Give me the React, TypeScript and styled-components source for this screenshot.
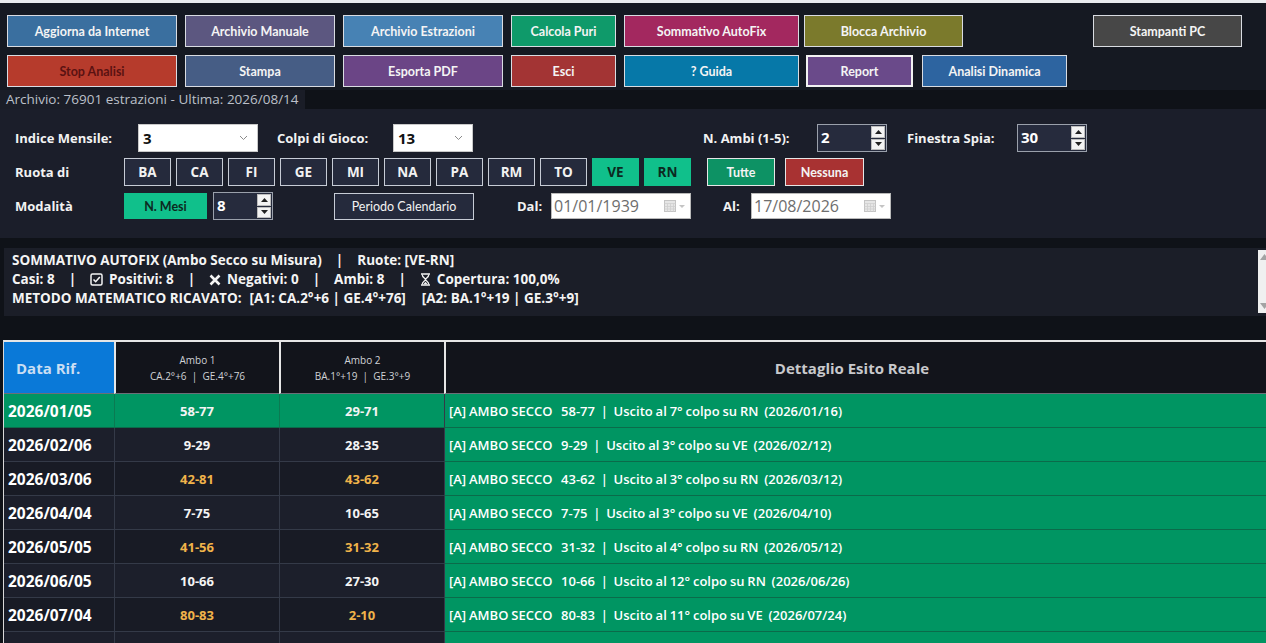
import React from "react";
import styled, { createGlobalStyle } from "styled-components";

const GlobalStyle = createGlobalStyle`
  html, body {
    margin: 0;
    padding: 0;
    background: #0f1218;
    overflow: hidden;
  }
  * {
    box-sizing: border-box;
  }
`;

const Page = styled.div`
  width: 1266px;
  height: 643px;
  overflow: hidden;
  background: #0f1218;
  font-family: "Open Sans", "Noto Sans", sans-serif;
  color: #fff;
`;

const TopStrip = styled.div`
  height: 3px;
  background: #e9ecef;
`;

const Toolbar = styled.div`
  background: #151922;
  padding: 12px 7px 3px;
  display: flex;
  flex-direction: column;
  gap: 8px;
`;

const ToolRow = styled.div`
  display: flex;
  gap: 8px;
`;

const ToolButton = styled.button<{ $w: number; $bg: string; $fg?: string; $thick?: boolean; $ml?: number }>`
  width: ${(p) => p.$w}px;
  height: 32px;
  margin-left: ${(p) => p.$ml ?? 0}px;
  background: ${(p) => p.$bg};
  color: ${(p) => p.$fg ?? "#f4f4f4"};
  border: ${(p) => (p.$thick ? "2px solid #f2f2f2" : "1px solid #d9dce2")};
  font-family: "Lato", "Open Sans", sans-serif;
  font-weight: 700;
  font-size: 12.5px;
  padding: 0;
  cursor: pointer;
`;

const StatusBar = styled.div`
  height: 19px;
  display: flex;
`;

const StatusText = styled.div`
  width: 305px;
  background: #1a1d27;
  color: #bcc0c9;
  font-size: 13.5px;
  line-height: 19px;
  padding-left: 6px;
  white-space: nowrap;
`;

const Panel = styled.div`
  background: #1b1e2a;
  padding: 15px 0 18px 15px;
  display: flex;
  flex-direction: column;
  gap: 6px;
`;

const FormRow = styled.div`
  display: flex;
  align-items: center;
  height: 28px;
`;

const FieldLabel = styled.span<{ $w: number; $ml?: number }>`
  width: ${(p) => p.$w}px;
  margin-left: ${(p) => p.$ml ?? 0}px;
  flex: none;
  font-size: 13px;
  font-weight: 700;
  color: #f2f2f2;
`;

const SelectBox = styled.div<{ $w: number }>`
  width: ${(p) => p.$w}px;
  height: 28px;
  background: #fff;
  border: 1px solid #c9c9c9;
  display: flex;
  align-items: center;
  justify-content: space-between;
  padding: 0 9px 0 4px;
  color: #111;
  font-size: 15px;
  font-weight: 700;
`;

const Spinner = styled.div<{ $w: number; $ml?: number }>`
  width: ${(p) => p.$w}px;
  height: 28px;
  margin-left: ${(p) => p.$ml ?? 0}px;
  background: #262b3d;
  border: 1px solid #9aa0ab;
  display: flex;
  align-items: stretch;
`;

const SpinValue = styled.span`
  flex: 1;
  padding-left: 3px;
  font-size: 15px;
  font-weight: 700;
  color: #fff;
  line-height: 25px;
`;

const SpinArrows = styled.div`
  width: 16px;
  display: flex;
  flex-direction: column;
  gap: 1px;
  padding: 1px;
`;

const SpinBtn = styled.div`
  flex: 1;
  background: #f3f3f3;
  border: 1px solid #bdbdbd;
  display: flex;
  align-items: center;
  justify-content: center;
`;

const RuotaGroup = styled.div`
  display: flex;
  gap: 5px;
`;

const RuotaButton = styled.button<{ $active?: boolean }>`
  width: 47px;
  height: 28px;
  padding: 0;
  background: ${(p) => (p.$active ? "#10c08b" : "#252a3c")};
  color: ${(p) => (p.$active ? "#0c2a1f" : "#f2f2f2")};
  border: 1px solid ${(p) => (p.$active ? "#10c08b" : "#c7ccd6")};
  font-family: "Open Sans", sans-serif;
  font-size: 13.5px;
  font-weight: 700;
`;

const ActionButton = styled.button<{ $w: number; $bg: string; $ml: number }>`
  width: ${(p) => p.$w}px;
  height: 28px;
  margin-left: ${(p) => p.$ml}px;
  padding: 0;
  background: ${(p) => p.$bg};
  color: #f4f4f4;
  border: 1px solid #e6e6e6;
  font-family: "Lato", sans-serif;
  font-size: 12.5px;
  font-weight: 700;
`;

const ModeButton = styled.button`
  width: 83px;
  height: 26px;
  padding: 0;
  background: #10c08b;
  color: #0c2a1f;
  border: none;
  font-family: "Lato", sans-serif;
  font-size: 12.5px;
  font-weight: 700;
`;

const PlainButton = styled.button`
  width: 140px;
  height: 27px;
  margin-left: 61px;
  padding: 0;
  background: #252a3c;
  color: #f2f2f2;
  border: 1px solid #c7ccd6;
  font-family: "Lato", sans-serif;
  font-size: 12.5px;
  font-weight: 400;
`;

const DateBox = styled.div`
  width: 140px;
  height: 26px;
  background: #fff;
  border: 1px solid #b9b9b9;
  display: flex;
  align-items: center;
  justify-content: space-between;
  padding: 0 4px 0 2px;
  color: #6e6e6e;
  font-size: 16px;
`;

const Summary = styled.div`
  margin: 10px -9px 0 4px;
  height: 68px;
  background: #1b1e28;
  display: flex;
  justify-content: space-between;
`;

const SummaryText = styled.div`
  padding: 3px 8px;
  font-size: 13.5px;
  font-weight: 700;
  color: #f4f4f4;
`;

const SummaryLine = styled.div`
  height: 19px;
  line-height: 19px;
  white-space: pre;
  display: flex;
  align-items: center;
`;

const Sep = styled.span`
  margin: 0 14px;
`;

const Gap = styled.span<{ $w: number }>`
  display: inline-block;
  width: ${(p) => p.$w}px;
`;

const IconSlot = styled.span`
  display: inline-flex;
  margin-right: 6px;
`;

const Scrollbar = styled.div`
  width: 17px;
  margin: 2px 0 3px;
  background: #f0f0f0;
  display: flex;
  flex-direction: column;
  justify-content: space-between;
  padding: 4px 0 4px 2px;
`;

const Table = styled.div`
  margin: 24px 0 0 3px;
  border-top: 2px solid #e6e6e6;
  border-left: 1px solid #d8d8d8;
`;

const GridRow = styled.div<{ $h: number }>`
  display: grid;
  grid-template-columns: 110px 165px 165px 1fr;
  height: ${(p) => p.$h}px;
`;

const HeadCell = styled.div<{ $blue?: boolean; $first?: boolean }>`
  background: ${(p) => (p.$blue ? "#0a79d8" : "#12141b")};
  border-left: ${(p) => (p.$first ? "none" : "2px solid #e6e6e6")};
  border-bottom: 1px solid #6b6f78;
  display: flex;
  flex-direction: column;
  justify-content: center;
  align-items: center;
  color: #d0d2d6;
`;

const DateHead = styled(HeadCell)`
  align-items: flex-start;
  padding-left: 12px;
  font-size: 15px;
  font-weight: 700;
  color: #c9def3;
`;

const AmboHead = styled(HeadCell)`
  font-size: 10px;
  line-height: 16px;
  white-space: pre;
`;

const DetailHead = styled(HeadCell)`
  font-size: 15px;
  font-weight: 700;
  color: #c8c9cc;
  padding-right: 8px;
`;

const Cell = styled.div<{ $green?: boolean; $alt?: boolean }>`
  background: ${(p) => (p.$green ? "#009562" : p.$alt ? "#181b25" : "#1c1f2b")};
  border-bottom: 1px solid ${(p) => (p.$green ? "#0b6b4a" : "#343a48")};
  border-left: 1px solid ${(p) => (p.$green ? "#0b7a52" : "#343a48")};
  display: flex;
  align-items: center;
`;

const DateCell = styled(Cell)`
  border-left: none;
  padding-left: 4px;
  font-size: 15.5px;
  font-weight: 700;
  color: #fff;
`;

const NumCell = styled(Cell)<{ $hot?: boolean }>`
  justify-content: center;
  font-size: 13px;
  font-weight: 700;
  color: ${(p) => (p.$hot ? "#f0b34a" : "#f4f4f4")};
`;

const DetailCell = styled(Cell)`
  background: #009562;
  border-bottom-color: #0b6b4a;
  border-left-color: #343a48;
  padding-left: 4px;
  font-size: 13px;
  font-weight: 600;
  color: #fff;
  white-space: pre;
  word-spacing: -0.5px;
`;

const Chevron = () => (
  <svg width="9" height="6" viewBox="0 0 9 6">
    <path d="M1 1l3.5 3.5L8 1" fill="none" stroke="#8a8a8a" strokeWidth="1" />
  </svg>
);

const Tri = ({ down }: { down?: boolean }) => (
  <svg width="7" height="4" viewBox="0 0 7 4">
    <path d={down ? "M0 0h7L3.5 4z" : "M0 4h7L3.5 0z"} fill="#222" />
  </svg>
);

const Spin = ({ value, w, ml }: { value: string; w: number; ml?: number }) => (
  <Spinner $w={w} $ml={ml}>
    <SpinValue>{value}</SpinValue>
    <SpinArrows>
      <SpinBtn>
        <Tri />
      </SpinBtn>
      <SpinBtn>
        <Tri down />
      </SpinBtn>
    </SpinArrows>
  </Spinner>
);

const CalIcon = () => (
  <svg width="22" height="14" viewBox="0 0 22 14">
    <rect x="0.5" y="1.5" width="11" height="11" fill="#e6e6e6" stroke="#c4c4c4" />
    <path d="M0.5 4.5h11M3.5 4.5v8M6.5 4.5v8M9.5 4.5v8M0.5 7.5h11M0.5 10h11" stroke="#cfcfcf" strokeWidth="0.8" />
    <path d="M15 6h6l-3 3z" fill="#c4c4c4" />
  </svg>
);

const CheckIcon = () => (
  <svg width="13" height="13" viewBox="0 0 13 13">
    <rect x="1" y="1" width="11" height="11" rx="1.5" fill="none" stroke="#f4f4f4" strokeWidth="1.5" />
    <path d="M3.5 6.5l2.2 2.2L9.8 4" fill="none" stroke="#f4f4f4" strokeWidth="1.6" />
  </svg>
);

const CrossIcon = () => (
  <svg width="12" height="12" viewBox="0 0 12 12">
    <path d="M1.5 1.5l9 9M10.5 1.5l-9 9" stroke="#f4f4f4" strokeWidth="2.6" />
  </svg>
);

const HourIcon = () => (
  <svg width="11" height="13" viewBox="0 0 11 13">
    <path d="M1 1h9M1 12h9" stroke="#f4f4f4" strokeWidth="1.6" />
    <path d="M2.2 1.5c0 3 3.3 3.6 3.3 5S2.2 8.5 2.2 11.5M8.8 1.5c0 3-3.3 3.6-3.3 5s3.3 2 3.3 5" fill="none" stroke="#f4f4f4" strokeWidth="1.3" />
    <path d="M3.4 11.2L5.5 8.8l2.1 2.4z" fill="#f4f4f4" />
  </svg>
);

const ScrollArrow = ({ down }: { down?: boolean }) => (
  <svg width="9" height="6" viewBox="0 0 9 6">
    <path d={down ? "M0 0h9L4.5 6z" : "M0 6h9L4.5 0z"} fill="#a3a3a3" />
  </svg>
);

const topRow = [
  { label: "Aggiorna da Internet", w: 170, bg: "#3a6f9f" },
  { label: "Archivio Manuale", w: 150, bg: "#5c5780" },
  { label: "Archivio Estrazioni", w: 160, bg: "#4782b4" },
  { label: "Calcola Puri", w: 105, bg: "#0f9a6a" },
  { label: "Sommativo AutoFix", w: 175, bg: "#a3285f" },
  { label: "Blocca Archivio", w: 159, bg: "#7b7a2c", ml: -3 },
  { label: "Stampanti PC", w: 149, bg: "#474747", ml: 122 },
];

const bottomRow = [
  { label: "Stop Analisi", w: 170, bg: "#b63b2c", fg: "#5a1212" },
  { label: "Stampa", w: 150, bg: "#465d85" },
  { label: "Esporta PDF", w: 160, bg: "#6b4586" },
  { label: "Esci", w: 105, bg: "#a33434" },
  { label: "?  Guida", w: 175, bg: "#0678a8" },
  { label: "Report", w: 107, bg: "#6a4a8a", thick: true, ml: -1 },
  { label: "Analisi Dinamica", w: 145, bg: "#2d64a0", ml: 1 },
];

const ruote = ["BA", "CA", "FI", "GE", "MI", "NA", "PA", "RM", "TO", "VE", "RN"];
const attive = ["VE", "RN"];

const rows = [
  { date: "2026/01/05", a1: "58-77", a2: "29-71", win: true, det: "[A] AMBO SECCO   58-77  |  Uscito al 7° colpo su RN  (2026/01/16)" },
  { date: "2026/02/06", a1: "9-29", a2: "28-35", det: "[A] AMBO SECCO   9-29  |  Uscito al 3° colpo su VE  (2026/02/12)" },
  { date: "2026/03/06", a1: "42-81", a2: "43-62", hot: true, det: "[A] AMBO SECCO   43-62  |  Uscito al 3° colpo su RN  (2026/03/12)" },
  { date: "2026/04/04", a1: "7-75", a2: "10-65", det: "[A] AMBO SECCO   7-75  |  Uscito al 3° colpo su VE  (2026/04/10)" },
  { date: "2026/05/05", a1: "41-56", a2: "31-32", hot: true, det: "[A] AMBO SECCO   31-32  |  Uscito al 4° colpo su RN  (2026/05/12)" },
  { date: "2026/06/05", a1: "10-66", a2: "27-30", det: "[A] AMBO SECCO   10-66  |  Uscito al 12° colpo su RN  (2026/06/26)" },
  { date: "2026/07/04", a1: "80-83", a2: "2-10", hot: true, det: "[A] AMBO SECCO   80-83  |  Uscito al 11° colpo su VE  (2026/07/24)" },
  // ultima riga: tagliata dal bordo della finestra
  { date: "", a1: "", a2: "", det: "" },
];

const App: React.FC = () => {
  return (
    <Page>
      <GlobalStyle />
      <TopStrip />
      <Toolbar>
        <ToolRow>
          {topRow.map((b) => (
            <ToolButton key={b.label} $w={b.w} $bg={b.bg} $ml={b.ml}>
              {b.label}
            </ToolButton>
          ))}
        </ToolRow>
        <ToolRow>
          {bottomRow.map((b) => (
            <ToolButton key={b.label} $w={b.w} $bg={b.bg} $fg={b.fg} $thick={b.thick} $ml={b.ml}>
              {b.label}
            </ToolButton>
          ))}
        </ToolRow>
      </Toolbar>

      <StatusBar>
        <StatusText>Archivio: 76901 estrazioni - Ultima: 2026/08/14</StatusText>
      </StatusBar>

      <Panel>
        <FormRow>
          <FieldLabel $w={123}>Indice Mensile:</FieldLabel>
          <SelectBox $w={120}>
            3
            <Chevron />
          </SelectBox>
          <FieldLabel $w={116} $ml={19}>Colpi di Gioco:</FieldLabel>
          <SelectBox $w={80}>
            13
            <Chevron />
          </SelectBox>
          <FieldLabel $w={114} $ml={230}>N. Ambi (1-5):</FieldLabel>
          <Spin value="2" w={70} />
          <FieldLabel $w={110} $ml={20}>Finestra Spia:</FieldLabel>
          <Spin value="30" w={70} />
        </FormRow>

        <FormRow>
          <FieldLabel $w={109}>Ruota di</FieldLabel>
          <RuotaGroup>
            {ruote.map((r) => (
              <RuotaButton key={r} $active={attive.includes(r)}>
                {r}
              </RuotaButton>
            ))}
          </RuotaGroup>
          <ActionButton $w={68} $bg="#0d9264" $ml={16}>
            Tutte
          </ActionButton>
          <ActionButton $w={79} $bg="#a83232" $ml={10}>
            Nessuna
          </ActionButton>
        </FormRow>

        <FormRow>
          <FieldLabel $w={109}>Modalità</FieldLabel>
          <ModeButton>N. Mesi</ModeButton>
          <Spin value="8" w={60} ml={6} />
          <PlainButton>Periodo Calendario</PlainButton>
          <FieldLabel $w={34} $ml={43}>Dal:</FieldLabel>
          <DateBox>
            01/01/1939
            <CalIcon />
          </DateBox>
          <FieldLabel $w={28} $ml={32}>Al:</FieldLabel>
          <DateBox>
            17/08/2026
            <CalIcon />
          </DateBox>
        </FormRow>
      </Panel>

      <Summary>
        <SummaryText>
          <SummaryLine>
            SOMMATIVO AUTOFIX (Ambo Secco su Misura)
            <Sep>|</Sep>
            Ruote: [VE-RN]
          </SummaryLine>
          <SummaryLine>
            Casi: 8
            <Sep>|</Sep>
            <IconSlot>
              <CheckIcon />
            </IconSlot>
            Positivi: 8
            <Sep>|</Sep>
            <IconSlot>
              <CrossIcon />
            </IconSlot>
            Negativi: 0
            <Sep>|</Sep>
            Ambi: 8
            <Sep>|</Sep>
            <IconSlot>
              <HourIcon />
            </IconSlot>
            Copertura: 100,0%
          </SummaryLine>
          <SummaryLine>
            METODO MATEMATICO RICAVATO:
            <Gap $w={8} />
            [A1: CA.2°+6 | GE.4°+76]
            <Gap $w={16} />
            [A2: BA.1°+19 | GE.3°+9]
          </SummaryLine>
        </SummaryText>
        <Scrollbar>
          <ScrollArrow />
          <ScrollArrow down />
        </Scrollbar>
      </Summary>

      <Table>
        <GridRow $h={52}>
          <DateHead $blue $first>Data Rif.</DateHead>
          <AmboHead>
            <span>Ambo 1</span>
            <span>{"CA.2°+6  |  GE.4°+76"}</span>
          </AmboHead>
          <AmboHead>
            <span>Ambo 2</span>
            <span>{"BA.1°+19  |  GE.3°+9"}</span>
          </AmboHead>
          <DetailHead>Dettaglio Esito Reale</DetailHead>
        </GridRow>
        {rows.map((r, i) => (
          <GridRow $h={34} key={i}>
            <DateCell $green={r.win} $alt={i % 2 === 0}>{r.date}</DateCell>
            <NumCell $green={r.win} $alt={i % 2 === 0} $hot={r.hot}>{r.a1}</NumCell>
            <NumCell $green={r.win} $alt={i % 2 === 0} $hot={r.hot}>{r.a2}</NumCell>
            <DetailCell>{r.det}</DetailCell>
          </GridRow>
        ))}
      </Table>
    </Page>
  );
};

export default App;
